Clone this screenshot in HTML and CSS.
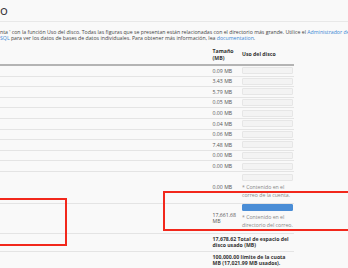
FILE: index.html
```html
<!DOCTYPE HTML>
<html>
<head>
  <meta charset="UTF-8">
  <title>Uso del disco</title>
  <link rel="stylesheet" href="styles.css">
</head>
<body>
  <div class="page">
    <div class="title-bar"><h1>o</h1></div>
    <p class="intro">nta ' con la función Uso del disco. Todas las figuras que se presentan están relacionadas con el directorio más grande. Utilice el <a href="#">Administrador de archivos</a><br><a href="#">SQL</a> para ver los datos de bases de datos individuales. Para obtener más información, lea <a href="#">documentation</a>.</p>

    <table class="usage">
      <thead>
        <tr>
          <th class="name"></th>
          <th class="size">Tamaño (MB)</th>
          <th class="graph">Uso del disco</th>
        </tr>
      </thead>
      <tbody>
        <tr><td></td><td class="size">0.09 MB</td><td class="graph"><div class="bar"></div></td></tr>
        <tr><td></td><td class="size">3.43 MB</td><td class="graph"><div class="bar"></div></td></tr>
        <tr><td></td><td class="size">5.79 MB</td><td class="graph"><div class="bar"></div></td></tr>
        <tr><td></td><td class="size">0.05 MB</td><td class="graph"><div class="bar"></div></td></tr>
        <tr><td></td><td class="size">0.00 MB</td><td class="graph"><div class="bar"></div></td></tr>
        <tr><td></td><td class="size">0.04 MB</td><td class="graph"><div class="bar"></div></td></tr>
        <tr><td></td><td class="size">0.06 MB</td><td class="graph"><div class="bar"></div></td></tr>
        <tr><td></td><td class="size">7.48 MB</td><td class="graph"><div class="bar"></div></td></tr>
        <tr><td></td><td class="size">0.00 MB</td><td class="graph"><div class="bar"></div></td></tr>
        <tr><td></td><td class="size">0.00 MB</td><td class="graph"><div class="bar"></div></td></tr>
        <tr class="tall">
          <td></td>
          <td class="size">0.00 MB</td>
          <td class="graph"><div class="bar"></div><div class="note">* Contenido en el correo de la cuenta.</div></td>
        </tr>
        <tr class="tall mail">
          <td></td>
          <td class="size">17,661.68 MB</td>
          <td class="graph"><div class="bar"><div class="fill" style="width:100%"></div></div><div class="note">* Contenido en el directorio del correo.</div></td>
        </tr>
        <tr class="total"><td></td><td colspan="2">17,678.62 Total de espacio del disco usado (MB)</td></tr>
        <tr class="total quota"><td></td><td colspan="2">100,000.00 límite de la cuota MB (17,021.99 MB usados).</td></tr>
      </tbody>
    </table>

    <div class="mark mark-left"></div>
    <div class="mark mark-right"></div>
  </div>
</body>
</html>
```

FILE: styles.css
```css
html, body { margin: 0; padding: 0; overflow: hidden; }
body { font-family: "Open Sans", Arial, sans-serif; background: #f9f9f9; color: #333; }
.page { position: relative; width: 348px; height: 268px; }

.title-bar { height: 21px; border-bottom: 1px solid #e8e8e8; }
h1 { margin: 0; padding-top: 2px; font-size: 13px; font-weight: normal; line-height: 16px; color: #333; }

.intro { margin: 7px 0 0 0; font-size: 5.2px; line-height: 6px; white-space: nowrap; color: #444; }
.intro a { color: #3a86d4; text-decoration: none; }

.usage { margin-top: 5px; width: 294px; border-collapse: collapse; font-size: 5.2px; line-height: 6.5px; }
.usage th { font-weight: bold; text-align: left; vertical-align: middle; padding: 2px 4px 3px 4px; border-bottom: 2px solid #b4b4b4; color: #333; }
.usage th.graph { padding-left: 2px; }
.usage td { padding: 1.3px 4px 1.3px 4px; border-bottom: 1px solid #e4e4e4; vertical-align: middle; color: #555; }
.usage .size { width: 22px; }
.usage .graph { width: 51px; padding-left: 2px; padding-right: 1px; }

.bar { height: 5px; border: 1px solid #e6e6e6; background: #f3f3f3; border-radius: 1px; }
.fill { height: 5px; background: #4a8dd6; border-radius: 1px; }

.tall td.graph { vertical-align: top; padding-top: 2px; padding-bottom: 3.4px; }
.note { margin-top: 2px; line-height: 8.3px; color: #888; }
.mail td.graph { padding-top: 0.5px; padding-bottom: 3px; }
.mail .bar { border-color: #4a8dd6; background: #4a8dd6; }
.mail .note { margin-top: 1.5px; }

.total td { font-weight: bold; color: #333; line-height: 6.3px; padding-top: 2.25px; padding-bottom: 2.7px; }
.quota td { padding-top: 1.55px; }

.mark { position: absolute; border: 2px solid #f2281c; }
.mark-left { left: -10px; top: 198px; width: 73px; height: 44px; }
.mark-right { left: 163px; top: 191px; width: 200px; height: 36px; }
```
